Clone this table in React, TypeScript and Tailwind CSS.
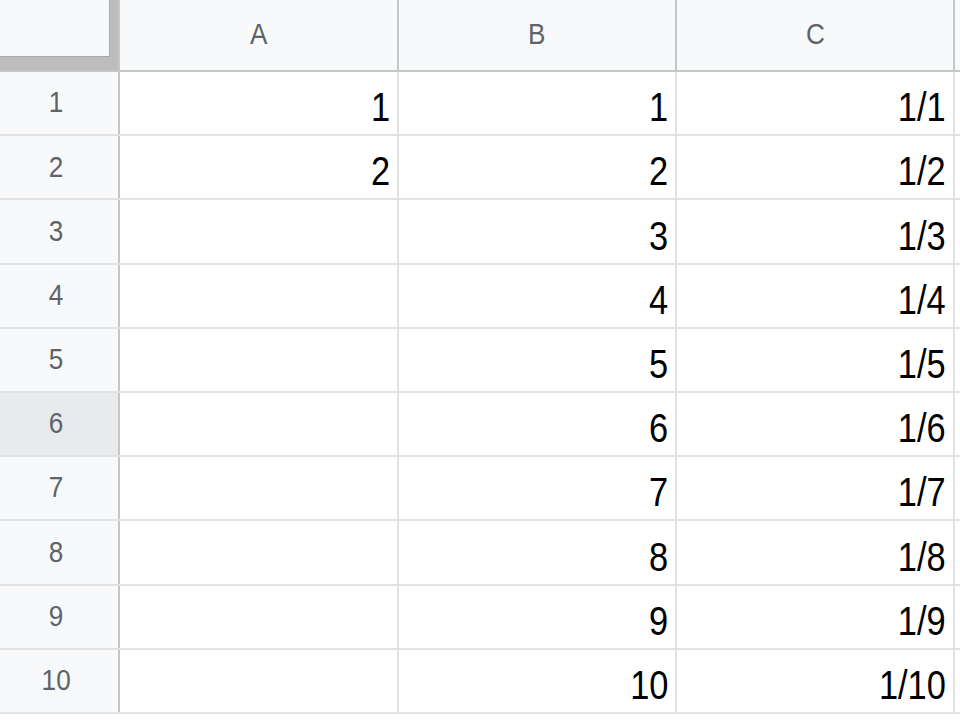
const COLS = ["A", "B", "C"];

// 각 행: A/B/C 값. 빈 칸은 ""
const ROWS: string[][] = [
  ["1", "1", "1/1"],
  ["2", "2", "1/2"],
  ["", "3", "1/3"],
  ["", "4", "1/4"],
  ["", "5", "1/5"],
  ["", "6", "1/6"],
  ["", "7", "1/7"],
  ["", "8", "1/8"],
  ["", "9", "1/9"],
  ["", "10", "1/10"],
];

// 테두리 포함 폭 (border-box)
const colWidth = ["w-[279px]", "w-[278px]", "w-[278px]"];

export default function App() {
  return (
    <div
      className="w-[960px] h-[720px] overflow-hidden bg-white"
      style={{ fontFamily: '"Liberation Sans", Arial, sans-serif' }}
    >
      {/* 열 머리글 */}
      <div className="flex h-[72px] border-b-2 border-[#c4c7c5]">
        <div className="w-[120px] shrink-0 bg-[#bdbdbd] border-r-2 border-[#c4c7c5]">
          <div className="w-[110px] h-[57px] bg-[#f8f9fa] border-r border-b border-[#a8a8a8]" />
        </div>
        {COLS.map((c, i) => (
          <div
            key={c}
            className={`${colWidth[i]} shrink-0 flex items-center justify-center bg-[#f8f9fa] border-r-2 border-[#c4c7c5]`}
          >
            <span className="inline-block scale-x-90 text-[29px] text-[#5f6368]">
              {c}
            </span>
          </div>
        ))}
        <div className="flex-1 bg-[#f8f9fa]" />
      </div>

      {/* 데이터 행 */}
      {ROWS.map((row, r) => (
        <div key={r} className="flex h-[64.2px] border-b-2 border-[#e2e2e2]">
          <div
            className={`w-[120px] shrink-0 flex items-center justify-center pr-[6px] border-r-2 border-[#c4c7c5] ${
              r === 5 ? "bg-[#e8eaed]" : "bg-[#f8f9fa]"
            }`}
          >
            <span className="inline-block scale-x-90 text-[29px] text-[#5f6368]">
              {r + 1}
            </span>
          </div>
          {row.map((v, i) => (
            <div
              key={i}
              className={`${colWidth[i]} shrink-0 flex items-end justify-end pr-[7px] pb-[3px] border-r-2 border-[#e2e2e2]`}
            >
              <span className="inline-block origin-right scale-x-[0.86] text-[40px] leading-[48px] text-black">
                {v}
              </span>
            </div>
          ))}
          <div className="flex-1" />
        </div>
      ))}
    </div>
  );
}
